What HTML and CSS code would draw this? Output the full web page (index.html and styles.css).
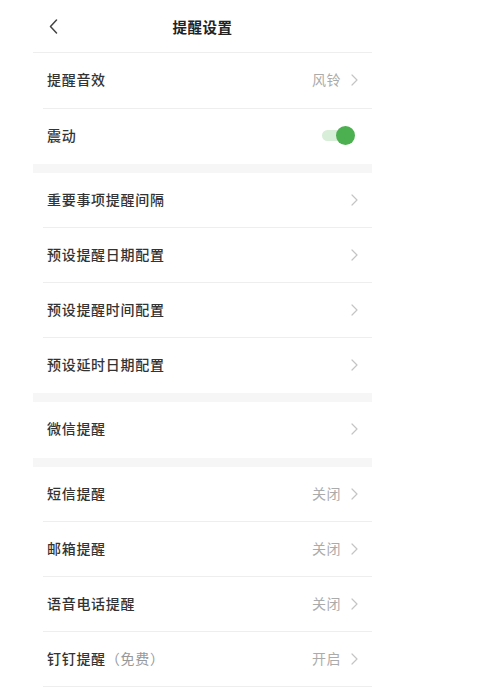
FILE: index.html
```html
<!DOCTYPE html>
<html lang="zh-CN">
<head>
<meta charset="utf-8">
<title>提醒设置</title>
<link rel="stylesheet" href="styles.css">
</head>
<body>
<div class="page">
  <header class="header">
    <span class="back">
      <svg width="9" height="15" viewBox="0 0 9 15"><path d="M7.5 1 L1.5 7.5 L7.5 14" fill="none" stroke="#444" stroke-width="1.5" stroke-linecap="round" stroke-linejoin="round"/></svg>
    </span>
    <h1 class="title">提醒设置</h1>
  </header>

  <section class="group">
    <div class="row"><span class="label">提醒音效</span><span class="right"><span class="value">风铃</span><svg class="chev" width="7" height="12" viewBox="0 0 7 12"><path d="M1 1 L6 6 L1 11" fill="none" stroke="#c4c4c4" stroke-width="1.2" stroke-linecap="round" stroke-linejoin="round"/></svg></span></div>
    <div class="row"><span class="label">震动</span><span class="right"><span class="switch"><span class="knob"></span></span></span></div>
  </section>
  <div class="gap"></div>
  <section class="group">
    <div class="row"><span class="label">重要事项提醒间隔</span><span class="right"><svg class="chev" width="7" height="12" viewBox="0 0 7 12"><path d="M1 1 L6 6 L1 11" fill="none" stroke="#c4c4c4" stroke-width="1.2" stroke-linecap="round" stroke-linejoin="round"/></svg></span></div>
    <div class="row"><span class="label">预设提醒日期配置</span><span class="right"><svg class="chev" width="7" height="12" viewBox="0 0 7 12"><path d="M1 1 L6 6 L1 11" fill="none" stroke="#c4c4c4" stroke-width="1.2" stroke-linecap="round" stroke-linejoin="round"/></svg></span></div>
    <div class="row"><span class="label">预设提醒时间配置</span><span class="right"><svg class="chev" width="7" height="12" viewBox="0 0 7 12"><path d="M1 1 L6 6 L1 11" fill="none" stroke="#c4c4c4" stroke-width="1.2" stroke-linecap="round" stroke-linejoin="round"/></svg></span></div>
    <div class="row"><span class="label">预设延时日期配置</span><span class="right"><svg class="chev" width="7" height="12" viewBox="0 0 7 12"><path d="M1 1 L6 6 L1 11" fill="none" stroke="#c4c4c4" stroke-width="1.2" stroke-linecap="round" stroke-linejoin="round"/></svg></span></div>
  </section>
  <div class="gap"></div>
  <section class="group">
    <div class="row"><span class="label">微信提醒</span><span class="right"><svg class="chev" width="7" height="12" viewBox="0 0 7 12"><path d="M1 1 L6 6 L1 11" fill="none" stroke="#c4c4c4" stroke-width="1.2" stroke-linecap="round" stroke-linejoin="round"/></svg></span></div>
  </section>
  <div class="gap"></div>
  <section class="group last">
    <div class="row"><span class="label">短信提醒</span><span class="right"><span class="value">关闭</span><svg class="chev" width="7" height="12" viewBox="0 0 7 12"><path d="M1 1 L6 6 L1 11" fill="none" stroke="#c4c4c4" stroke-width="1.2" stroke-linecap="round" stroke-linejoin="round"/></svg></span></div>
    <div class="row"><span class="label">邮箱提醒</span><span class="right"><span class="value">关闭</span><svg class="chev" width="7" height="12" viewBox="0 0 7 12"><path d="M1 1 L6 6 L1 11" fill="none" stroke="#c4c4c4" stroke-width="1.2" stroke-linecap="round" stroke-linejoin="round"/></svg></span></div>
    <div class="row"><span class="label">语音电话提醒</span><span class="right"><span class="value">关闭</span><svg class="chev" width="7" height="12" viewBox="0 0 7 12"><path d="M1 1 L6 6 L1 11" fill="none" stroke="#c4c4c4" stroke-width="1.2" stroke-linecap="round" stroke-linejoin="round"/></svg></span></div>
    <div class="row"><span class="label">钉钉提醒<span class="note">（免费）</span></span><span class="right"><span class="value">开启</span><svg class="chev" width="7" height="12" viewBox="0 0 7 12"><path d="M1 1 L6 6 L1 11" fill="none" stroke="#c4c4c4" stroke-width="1.2" stroke-linecap="round" stroke-linejoin="round"/></svg></span></div>
  </section>
</div>
</body>
</html>
```

FILE: styles.css
```css
html, body {
  margin: 0;
  padding: 0;
  background: #fff;
}
body {
  font-family: "Noto Sans CJK SC", "Noto Sans", sans-serif;
  color: #333;
}
.page {
  width: 339px;
  margin-left: 33px;
}
.header {
  height: 52px;
  border-bottom: 1px solid #eeeeee;
  display: flex;
  align-items: center;
  justify-content: center;
  position: relative;
}
.back {
  position: absolute;
  left: 16px;
  top: 19px;
  display: flex;
}
.title {
  margin: 0;
  font-size: 14.5px;
  font-weight: 700;
  color: #222;
  letter-spacing: 0.5px;
}
.row {
  height: 54px;
  margin-left: 10px;
  padding-left: 4px;
  padding-right: 14px;
  border-bottom: 1px solid #eeeeee;
  display: flex;
  align-items: center;
  justify-content: space-between;
}
.row:first-child {
  height: 54.5px;
}
.group .row:last-child {
  border-bottom-color: transparent;
}
.group.last .row:last-child {
  border-bottom-color: #eeeeee;
}
.label {
  font-size: 14px;
  letter-spacing: 0.7px;
  color: #333;
  font-weight: 500;
  position: relative;
  top: -1px;
}
.note {
  color: #999;
  font-weight: 400;
}
.right {
  display: flex;
  align-items: center;
}
.value {
  font-size: 14px;
  color: #ababab;
  margin-right: 10px;
  letter-spacing: 0.5px;
  position: relative;
  top: -1px;
}
.chev {
  display: block;
}
.gap {
  height: 9px;
  background: #f6f6f6;
}
.switch {
  position: relative;
  display: block;
  width: 29px;
  height: 11px;
  border-radius: 6px;
  background: #d8eed8;
  margin-right: 7px;
}
.knob {
  position: absolute;
  right: -4px;
  top: -4px;
  width: 19px;
  height: 19px;
  border-radius: 50%;
  background: #4caf50;
}
```
